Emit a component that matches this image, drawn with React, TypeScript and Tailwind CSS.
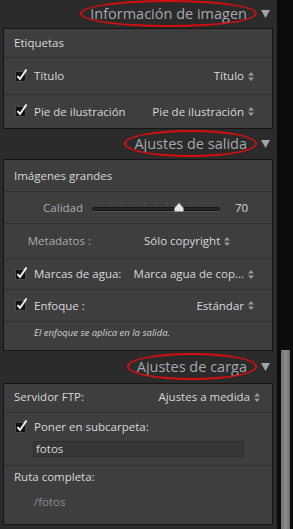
import React from "react";

const font = { fontFamily: '"Open Sans", "Liberation Sans", sans-serif' };

// small up/down arrows next to a popup value
const Updown = () => (
  <svg width="6" height="9" viewBox="0 0 6 9" className="ml-[4px] shrink-0">
    <polygon points="0,3.5 6,3.5 3,0" fill="#9a9a9a" />
    <polygon points="0,5.5 6,5.5 3,9" fill="#9a9a9a" />
  </svg>
);

const Check = () => (
  <svg width="14" height="14" viewBox="0 0 14 14" className="shrink-0 -mt-[3px]">
    <rect x="0.5" y="3.5" width="10" height="10" fill="#111" stroke="#4a4a4a" />
    <path d="M2.5 8.2 L5 11 L11.5 1.5" stroke="#f2f2f2" strokeWidth="2" fill="none" strokeLinejoin="miter" />
  </svg>
);

const Triangle = () => (
  <svg width="9" height="8" viewBox="0 0 9 8" className="ml-[14px] shrink-0">
    <polygon points="0,0 9,0 4.5,8" fill="#a4a4a4" />
  </svg>
);

interface HeaderProps {
  title: string;
  height: string;
}

const Header: React.FC<HeaderProps> = ({ title, height }) => (
  <div className={`flex items-center justify-end pr-[3px] ${height}`}>
    <span className="relative text-[14.5px] leading-none text-[#a3a9af]">
      {title}
      {/* red marker drawn over the title */}
      <span className="absolute -left-[10px] -right-[10px] -top-[7px] -bottom-[6px] rounded-[50%] border-2 border-[#d40f0f]" />
    </span>
    <Triangle />
  </div>
);

const Divider = () => <div className="h-px bg-[#323232]" />;

const Slider = () => (
  <div className="relative w-[128px] h-[14px] shrink-0">
    <div className="absolute left-[6px] right-[6px] top-[1px] flex justify-between">
      {Array.from({ length: 11 }).map((_, i) => (
        <span key={i} className="w-px h-[2px] bg-[#5a5a5a]" />
      ))}
    </div>
    <div className="absolute left-0 right-0 top-[6px] h-[4px] rounded-full bg-[#262626] border border-[#141414] shadow-[0_1px_0_#555]" />
    <svg width="10" height="9" viewBox="0 0 10 9" className="absolute left-[82px] top-[2px]">
      <polygon points="5,0 9.5,5 9.5,8.5 0.5,8.5 0.5,5" fill="#e6e6e6" stroke="#8a8a8a" strokeWidth="0.6" />
    </svg>
  </div>
);

export default function App() {
  return (
    <div className="flex w-[293px] h-[529px] bg-[#0c0c0c] overflow-hidden" style={font}>
      <div className="w-[277px] h-full bg-[#2b2b2b] pl-[3px] pr-[4px] flex flex-col text-[11.5px] text-[#d6d8da]">
        <Header title="Información de imagen" height="h-[28px]" />

        <div className="border border-[#141414] bg-[#3e3e3e]">
          <div className="h-[28px] flex items-center pl-[10px]">Etiquetas</div>
          <Divider />
          <div className="h-[36px] flex items-center pl-[11px] pr-[18px]">
            <Check />
            <span className="ml-[5px]">Título</span>
            <span className="ml-auto flex items-center">Título<Updown /></span>
          </div>
          <Divider />
          <div className="h-[33px] flex items-center pl-[11px] pr-[18px]">
            <Check />
            <span className="ml-[5px]">Pie de ilustración</span>
            <span className="ml-auto flex items-center">Pie de ilustración<Updown /></span>
          </div>
        </div>

        <Header title="Ajustes de salida" height="h-[30px]" />

        <div className="border border-[#141414] bg-[#3e3e3e]">
          <div className="h-[31px] flex items-center pl-[10px]">Imágenes grandes</div>
          <Divider />
          <div className="h-[31px] flex items-center">
            <span className="w-[79px] text-right text-[#a9acaf]">Calidad</span>
            <span className="ml-[9px]"><Slider /></span>
            <span className="ml-[15px]">70</span>
          </div>
          <Divider />
          <div className="h-[34px] flex items-center">
            <span className="w-[87px] text-right text-[#a9acaf]">Metadatos :</span>
            <span className="ml-[53px] flex items-center">Sólo copyright<Updown /></span>
          </div>
          <Divider />
          <div className="h-[30px] flex items-center pl-[11px] pr-[18px]">
            <Check />
            <span className="ml-[5px]">Marcas de agua:</span>
            <span className="ml-auto flex items-center">Marca agua de cop...<Updown /></span>
          </div>
          <Divider />
          <div className="h-[31px] flex items-center pl-[11px] pr-[18px]">
            <Check />
            <span className="ml-[5px]">Enfoque :</span>
            <span className="ml-auto flex items-center">Estándar<Updown /></span>
          </div>
          <Divider />
          <div className="h-[28px] pl-[30px] pt-[4px] text-[9.5px] italic text-[#d0d2d4]">
            El enfoque se aplica en la salida.
          </div>
        </div>

        <Header title="Ajustes de carga" height="h-[32px]" />

        <div className="border border-[#141414] bg-[#3e3e3e]">
          <div className="h-[28px] flex items-center pl-[10px] pr-[12px] pb-[2px]">
            <span>Servidor FTP:</span>
            <span className="ml-auto flex items-center">Ajustes a medida<Updown /></span>
          </div>
          <Divider />
          <div className="h-[52px] pl-[11px]">
            <div className="h-[28px] flex items-center">
              <Check />
              <span className="ml-[5px]">Poner en subcarpeta:</span>
            </div>
            <div className="ml-[18px] w-[211px] h-[16px] flex items-center pl-[2px] bg-[#363636] border border-[#2e2e2e]">
              fotos
            </div>
          </div>
          <Divider />
          <div className="h-[58px]">
            <div className="h-[22px] flex items-center pl-[10px]">Ruta completa:</div>
            <div className="h-[28px] flex items-center pl-[30px] text-[#8c8e90]">/fotos</div>
          </div>
        </div>
      </div>

      <div className="flex-1 flex flex-col pl-[4px] pr-[3px]">
        <div className="h-[350px] shrink-0" />
        <div className="flex-1 bg-[linear-gradient(90deg,#6e6e6e,#8c8c8c_50%,#6e6e6e)]" />
      </div>
    </div>
  );
}
